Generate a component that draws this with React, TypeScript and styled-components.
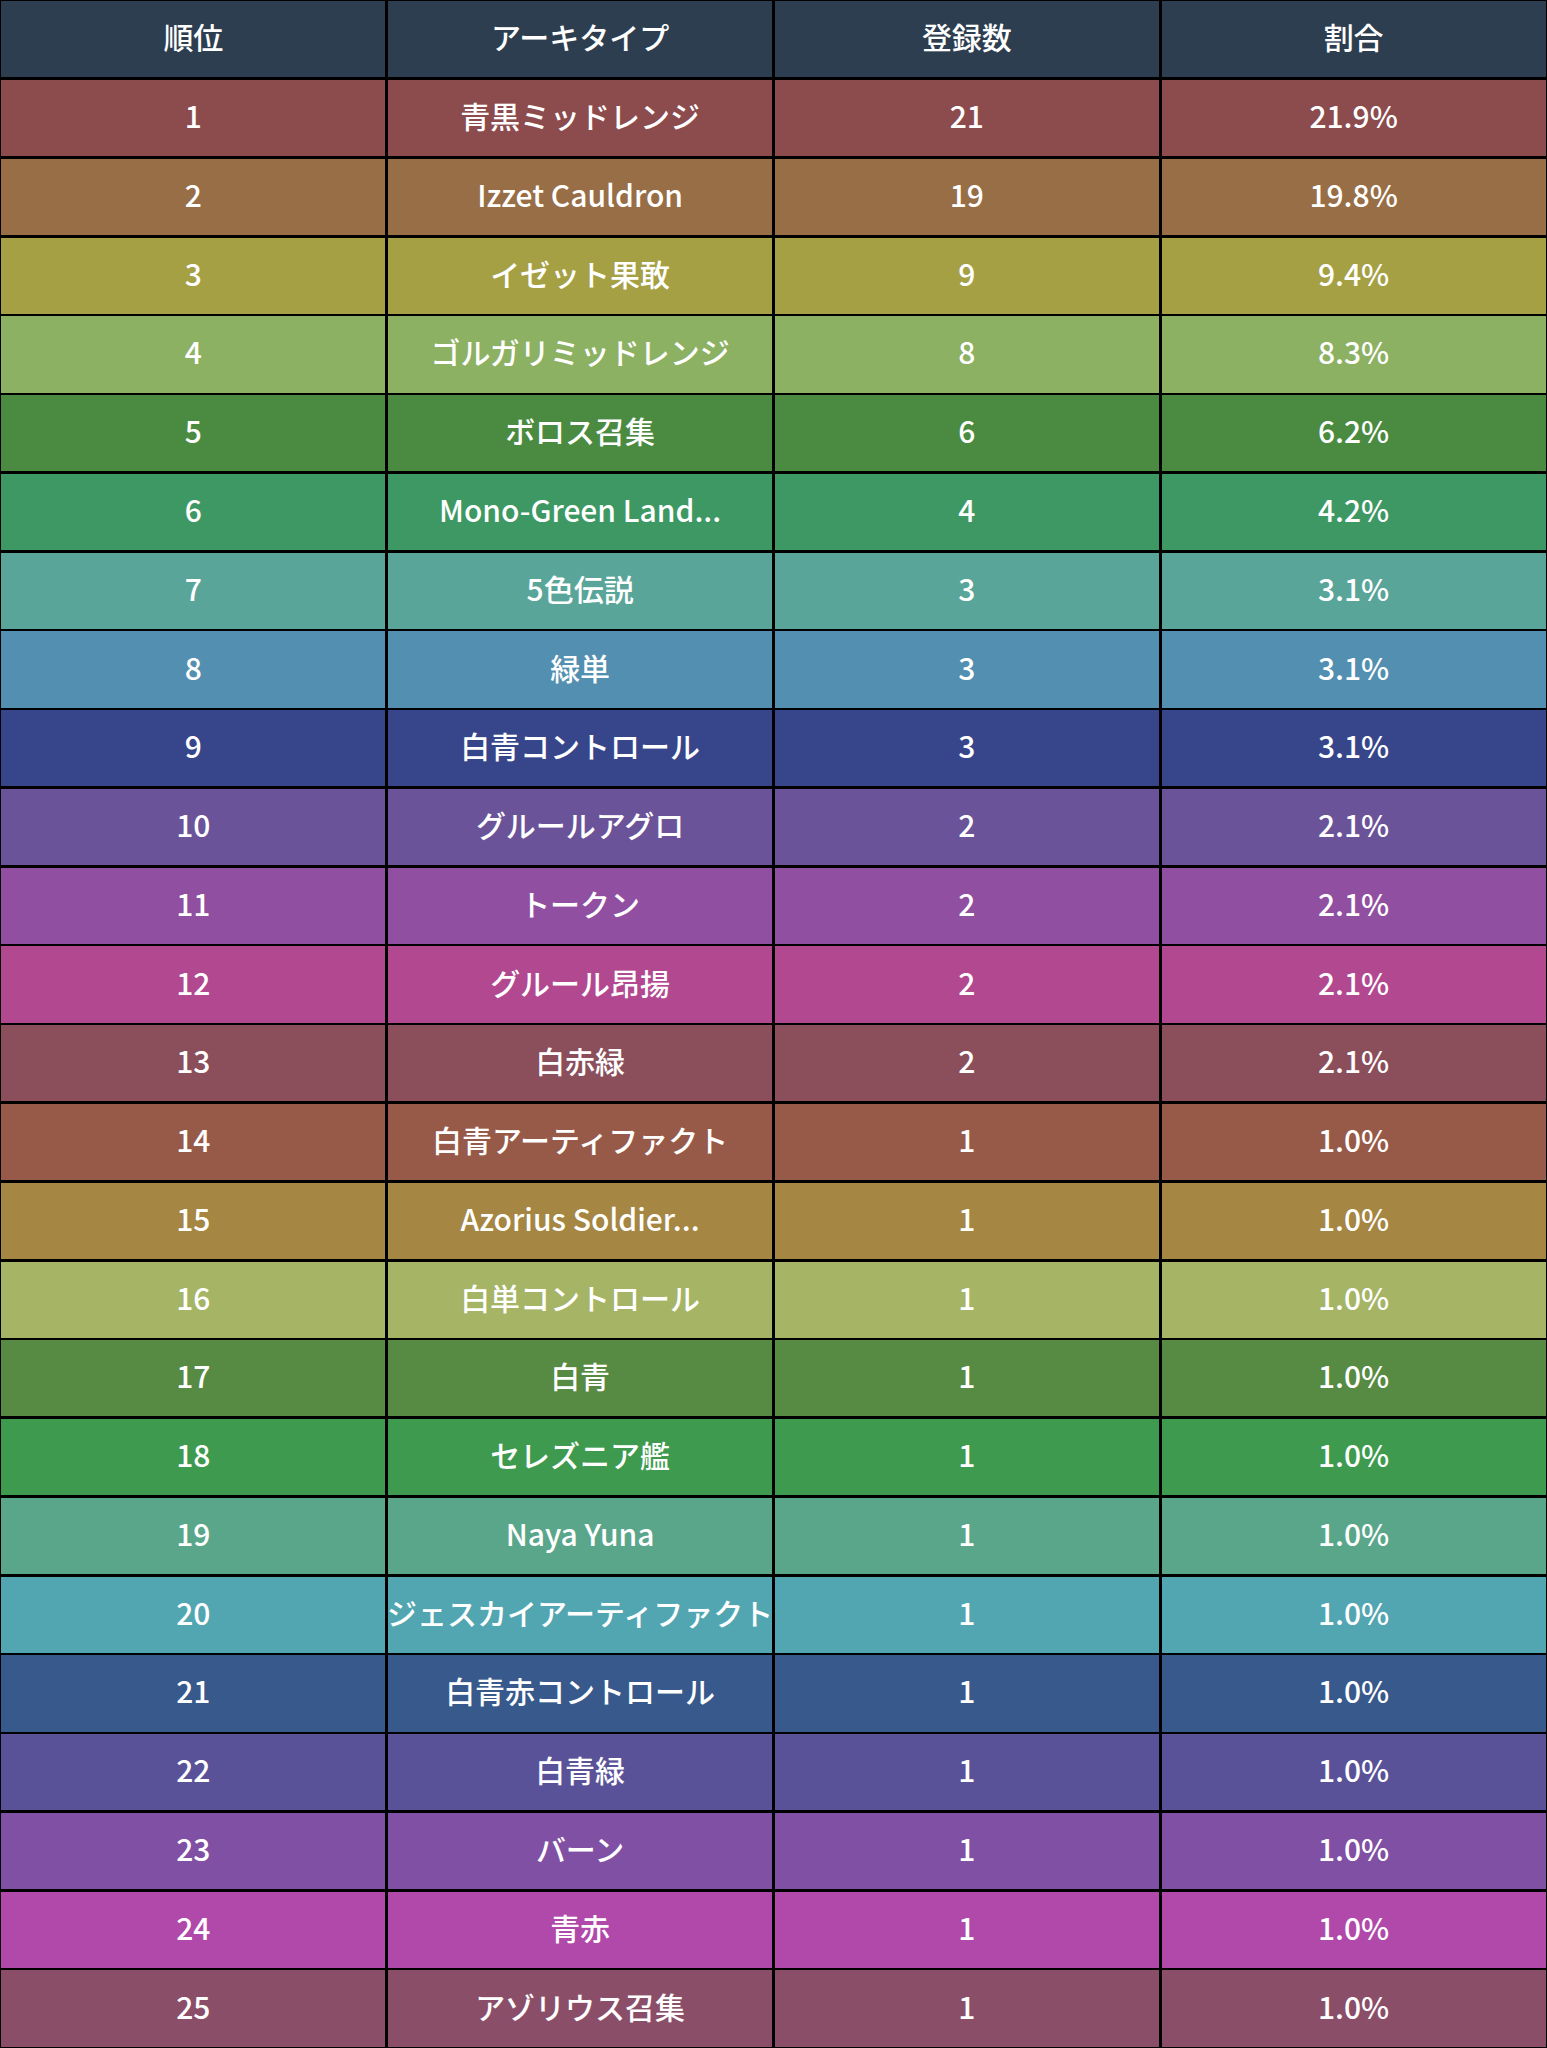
import React from "react";
import styled, { createGlobalStyle } from "styled-components";

const GlobalStyle = createGlobalStyle`
  html, body {
    margin: 0;
    padding: 0;
    background: #000;
  }
  body {
    font-family: "Noto Sans CJK JP", "Noto Sans", sans-serif;
  }
`;

const Table = styled.div`
  display: flex;
  flex-direction: column;
  gap: 2.6px;
  padding: 1.3px;
  width: 1547px;
  height: 2048px;
  box-sizing: border-box;
  background: #000;
`;

const Row = styled.div`
  flex: 1;
  display: grid;
  grid-template-columns: repeat(4, 1fr);
  gap: 2.6px;
  min-height: 0;
`;

const Cell = styled.div<{ $bg: string }>`
  display: flex;
  align-items: center;
  justify-content: center;
  box-sizing: border-box;
  padding-bottom: 6px;
  background: ${(p) => p.$bg};
  color: #fff;
  font-size: 30px;
  font-weight: 500;
  white-space: nowrap;
  overflow: hidden;
`;

const HEADER_BG = "#2c3e50";

type Entry = { name: string; count: number; pct: string; color: string };

const rows: Entry[] = [
  { name: "青黒ミッドレンジ", count: 21, pct: "21.9%", color: "#8c4b4d" },
  { name: "Izzet Cauldron", count: 19, pct: "19.8%", color: "#986e47" },
  { name: "イゼット果敢", count: 9, pct: "9.4%", color: "#a6a045" },
  { name: "ゴルガリミッドレンジ", count: 8, pct: "8.3%", color: "#8db163" },
  { name: "ボロス召集", count: 6, pct: "6.2%", color: "#4a8b41" },
  { name: "Mono-Green Land...", count: 4, pct: "4.2%", color: "#3e9863" },
  { name: "5色伝説", count: 3, pct: "3.1%", color: "#5aa59a" },
  { name: "緑単", count: 3, pct: "3.1%", color: "#528fb1" },
  { name: "白青コントロール", count: 3, pct: "3.1%", color: "#37468a" },
  { name: "グルールアグロ", count: 2, pct: "2.1%", color: "#6a5399" },
  { name: "トークン", count: 2, pct: "2.1%", color: "#904fa0" },
  { name: "グルール昂揚", count: 2, pct: "2.1%", color: "#b14890" },
  { name: "白赤緑", count: 2, pct: "2.1%", color: "#8b4e5b" },
  { name: "白青アーティファクト", count: 1, pct: "1.0%", color: "#985a48" },
  { name: "Azorius Soldier...", count: 1, pct: "1.0%", color: "#a58642" },
  { name: "白単コントロール", count: 1, pct: "1.0%", color: "#a5b465" },
  { name: "白青", count: 1, pct: "1.0%", color: "#578a42" },
  { name: "セレズニア艦", count: 1, pct: "1.0%", color: "#3d9a4e" },
  { name: "Naya Yuna", count: 1, pct: "1.0%", color: "#5aa68a" },
  { name: "ジェスカイアーティファクト", count: 1, pct: "1.0%", color: "#52a6b1" },
  { name: "白青赤コントロール", count: 1, pct: "1.0%", color: "#37598b" },
  { name: "白青緑", count: 1, pct: "1.0%", color: "#5a5299" },
  { name: "バーン", count: 1, pct: "1.0%", color: "#7f50a3" },
  { name: "青赤", count: 1, pct: "1.0%", color: "#b149aa" },
  { name: "アゾリウス召集", count: 1, pct: "1.0%", color: "#8b4e69" },
];

export default function App() {
  return (
    <>
      <GlobalStyle />
      <Table>
        <Row>
          <Cell $bg={HEADER_BG}>順位</Cell>
          <Cell $bg={HEADER_BG}>アーキタイプ</Cell>
          <Cell $bg={HEADER_BG}>登録数</Cell>
          <Cell $bg={HEADER_BG}>割合</Cell>
        </Row>
        {rows.map((r, i) => (
          <Row key={r.name}>
            <Cell $bg={r.color}>{i + 1}</Cell>
            <Cell $bg={r.color}>{r.name}</Cell>
            <Cell $bg={r.color}>{r.count}</Cell>
            <Cell $bg={r.color}>{r.pct}</Cell>
          </Row>
        ))}
      </Table>
    </>
  );
}
